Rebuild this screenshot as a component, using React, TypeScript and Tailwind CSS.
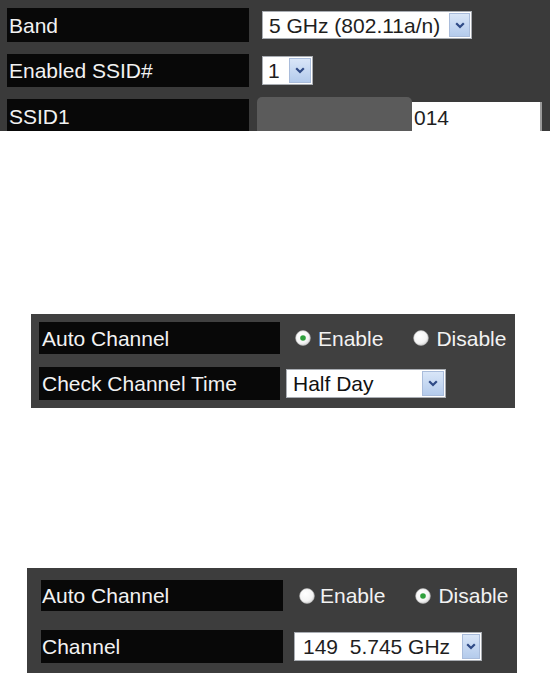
import React from 'react';

const font = { fontFamily: '"Liberation Sans", Arial, sans-serif' };

const Label = ({ text, className }: { text: string; className: string }) => (
  <div className={`bg-[#080808] text-[#f2f2f2] text-[21px] leading-none flex shrink-0 ${className}`}>
    {text}
  </div>
);

const Arrow = ({ className }: { className: string }) => (
  <div className={`flex items-center justify-center bg-gradient-to-b from-[#d9e6f8] to-[#b4cbec] border border-[#a9bcdb] ${className}`}>
    <svg width="10" height="7" viewBox="0 0 10 7">
      <path d="M1.2 1.2 L5 5 L8.8 1.2" fill="none" stroke="#2f4a86" strokeWidth="2.2" />
    </svg>
  </div>
);

const Select = ({ text, className, textClass, arrowClass }: { text: string; className: string; textClass: string; arrowClass: string }) => (
  <div className={`flex items-center bg-white border border-[#a9adb3] shrink-0 ${className}`}>
    <span className={`flex-1 text-[#1e1e1e] text-[21px] leading-none whitespace-pre ${textClass}`}>{text}</span>
    <Arrow className={arrowClass} />
  </div>
);

const Radio = ({ on }: { on: boolean }) => (
  <svg width="16" height="16" viewBox="0 0 16 16" className="shrink-0">
    <defs>
      <radialGradient id={on ? 'rg-on' : 'rg-off'} cx="0.4" cy="0.35" r="0.75">
        <stop offset="0" stopColor="#ffffff" />
        <stop offset="0.65" stopColor="#f4f4f4" />
        <stop offset="1" stopColor="#c8c8c8" />
      </radialGradient>
    </defs>
    <circle cx="8" cy="8" r="7.4" fill={`url(#${on ? 'rg-on' : 'rg-off'})`} stroke="#b0b0b0" strokeWidth="0.6" />
    {on && <circle cx="8" cy="8" r="2.8" fill="#2fa03c" />}
  </svg>
);

const RadioPair = ({ enabled, gapFirst, gapSecond }: { enabled: boolean; gapFirst: string; gapSecond: string }) => (
  <div className="flex items-center text-[21px] leading-none text-[#f2f2f2]">
    <Radio on={enabled} />
    <span className={gapFirst}>Enable</span>
    <span className="ml-[30px] flex"><Radio on={!enabled} /></span>
    <span className={gapSecond}>Disable</span>
  </div>
);

export default function App() {
  return (
    <div className="w-[550px] h-[673px] bg-white flex flex-col overflow-hidden" style={font}>
      {/* wireless basic */}
      <div className="h-[131px] shrink-0 bg-[#3a3a3a] pl-[7px] pt-[8px] overflow-hidden flex flex-col gap-[12px]">
        <div className="flex items-center gap-[13px]">
          <Label text="Band" className="w-[242px] h-[34px] pl-[2px] items-center" />
          <Select text="5 GHz (802.11a/n)" className="w-[210px] h-[28px]" textClass="pl-[6px]" arrowClass="w-[21px] h-[24px] mr-[1px]" />
        </div>
        <div className="flex items-center gap-[13px]">
          <Label text="Enabled SSID#" className="w-[242px] h-[33px] pl-[2px] items-center" />
          <Select text="1" className="w-[51px] h-[29px]" textClass="pl-[5px]" arrowClass="w-[22px] h-[25px] mr-[1px]" />
        </div>
        <div className="flex items-start">
          <Label text="SSID1" className="w-[242px] h-[32px] pl-[2px] pt-[7px] items-start" />
          <div className="ml-[8px] -mt-[2px] w-[155px] h-[34px] bg-[#5b5b5b] rounded-t-[5px] shrink-0" />
          <div className="mt-[3px] w-[130px] h-[29px] bg-white border-r-2 border-[#9a9a9a] text-[21px] leading-none text-[#1e1e1e] pt-[5px] pl-[2px] shrink-0">
            014
          </div>
        </div>
      </div>

      <div className="h-[183px] shrink-0" />

      {/* auto channel enabled */}
      <div className="ml-[31px] w-[484px] h-[94px] shrink-0 bg-[#404040] pl-[8px] pt-[8px] flex flex-col gap-[13px]">
        <div className="flex items-center">
          <Label text="Auto Channel" className="w-[241px] h-[32px] pl-[3px] items-center" />
          <div className="ml-[15px]">
            <RadioPair enabled={true} gapFirst="ml-[7px]" gapSecond="ml-[7px]" />
          </div>
        </div>
        <div className="flex items-center">
          <Label text="Check Channel Time" className="w-[241px] h-[33px] pl-[3px] items-center" />
          <Select text="Half Day" className="ml-[6px] w-[160px] h-[29px]" textClass="pl-[6px] text-[#111]" arrowClass="w-[22px] h-[25px] mr-[1px]" />
        </div>
      </div>

      <div className="h-[160px] shrink-0" />

      {/* auto channel disabled */}
      <div className="ml-[27px] w-[490px] h-[105px] shrink-0 bg-[#3d3d3d] pl-[14px] pt-[12px] flex flex-col gap-[19px]">
        <div className="flex items-center">
          <Label text="Auto Channel" className="w-[242px] h-[31px] pl-[1px] items-center" />
          <div className="ml-[16px]">
            <RadioPair enabled={false} gapFirst="ml-[5px]" gapSecond="ml-[7px]" />
          </div>
        </div>
        <div className="flex items-center">
          <Label text="Channel" className="w-[242px] h-[33px] pl-[1px] items-center" />
          <Select text="149  5.745 GHz" className="ml-[11px] w-[188px] h-[29px]" textClass="pl-[8px]" arrowClass="w-[18px] h-[25px] mr-[1px]" />
        </div>
      </div>
    </div>
  );
}
